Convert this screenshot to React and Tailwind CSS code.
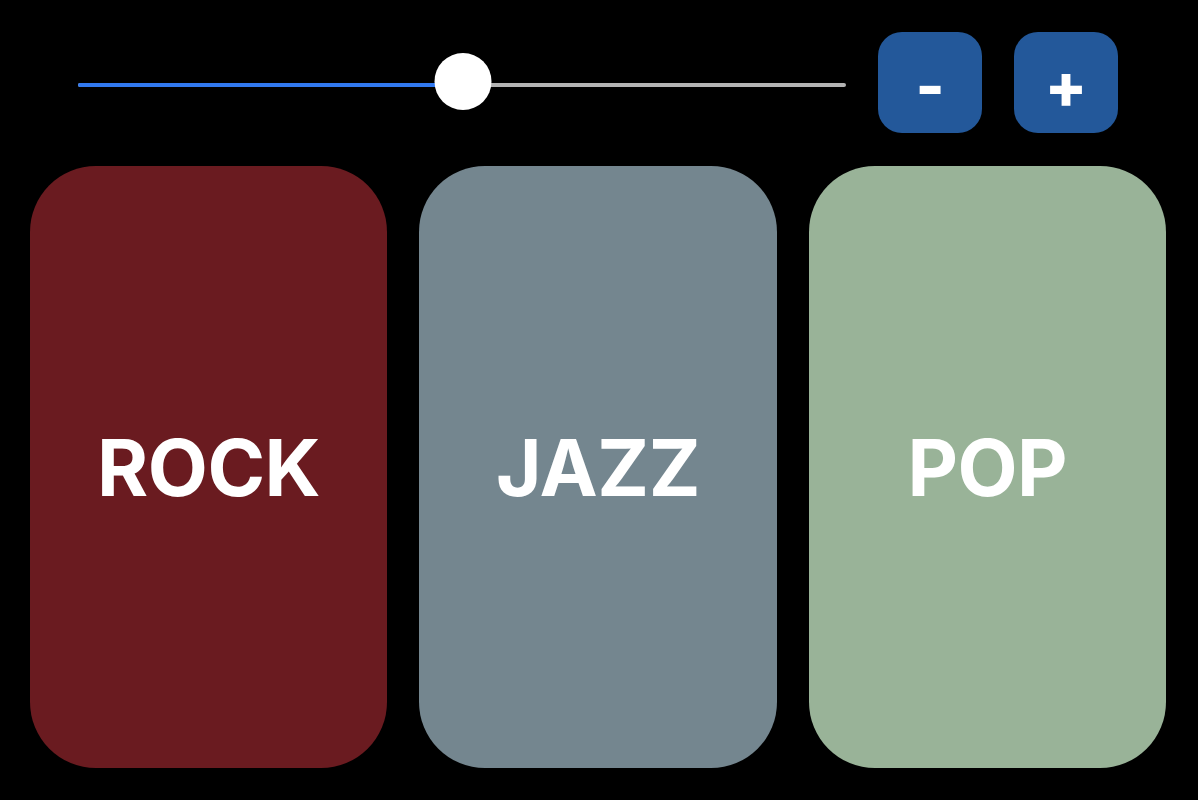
import { useState } from "react";

const genres = [
  { name: "ROCK", bg: "bg-[#6a1b20]" },
  { name: "JAZZ", bg: "bg-[#74868f]" },
  { name: "POP", bg: "bg-[#99b398]" },
];

export default function App() {
  const [value, setValue] = useState(50);
  const pct = value;

  return (
    <div
      className="w-[1198px] h-[800px] bg-black flex flex-col"
      style={{ fontFamily: "Inter, 'Liberation Sans', sans-serif" }}
    >
      {/* Top controls */}
      <div className="flex items-center pt-[32px] pl-[78px] pr-[80px] h-[133px] gap-[32px]">
        <div className="flex-1 relative h-[57px] flex items-center">
          <div className="w-full h-[4px] mt-[4px] rounded-full bg-[#b3b3b3] relative">
            <div
              className="absolute left-0 top-0 h-[4px] rounded-full bg-[#3179f0]"
              style={{ width: `${pct}%` }}
            />
          </div>
          <div
            className="absolute top-[-1px] w-[57px] h-[57px] rounded-full bg-white -translate-x-1/2 ml-[1px]"
            style={{ left: `${pct}%` }}
          />
        </div>
        <button
          onClick={() => setValue(Math.max(0, value - 10))}
          className="w-[104px] h-[101px] rounded-[24px] bg-[#23589a] text-white text-[62px] leading-none font-extrabold flex items-center justify-center pt-[6px]"
        >
          -
        </button>
        <button
          onClick={() => setValue(Math.min(100, value + 10))}
          className="w-[104px] h-[101px] rounded-[24px] bg-[#23589a] text-white text-[62px] leading-none font-extrabold flex items-center justify-center pt-[6px]"
        >
          +
        </button>
      </div>

      {/* Genre cards */}
      <div className="flex gap-[32px] pl-[30px] pr-[32px] pt-[33px]">
        {genres.map((g) => (
          <div
            key={g.name}
            className={`flex-1 h-[602px] rounded-[66px] ${g.bg} flex items-center justify-center`}
          >
            <span className="text-white font-bold text-[78px] tracking-[-0.5px]">
              {g.name}
            </span>
          </div>
        ))}
      </div>
    </div>
  );
}
